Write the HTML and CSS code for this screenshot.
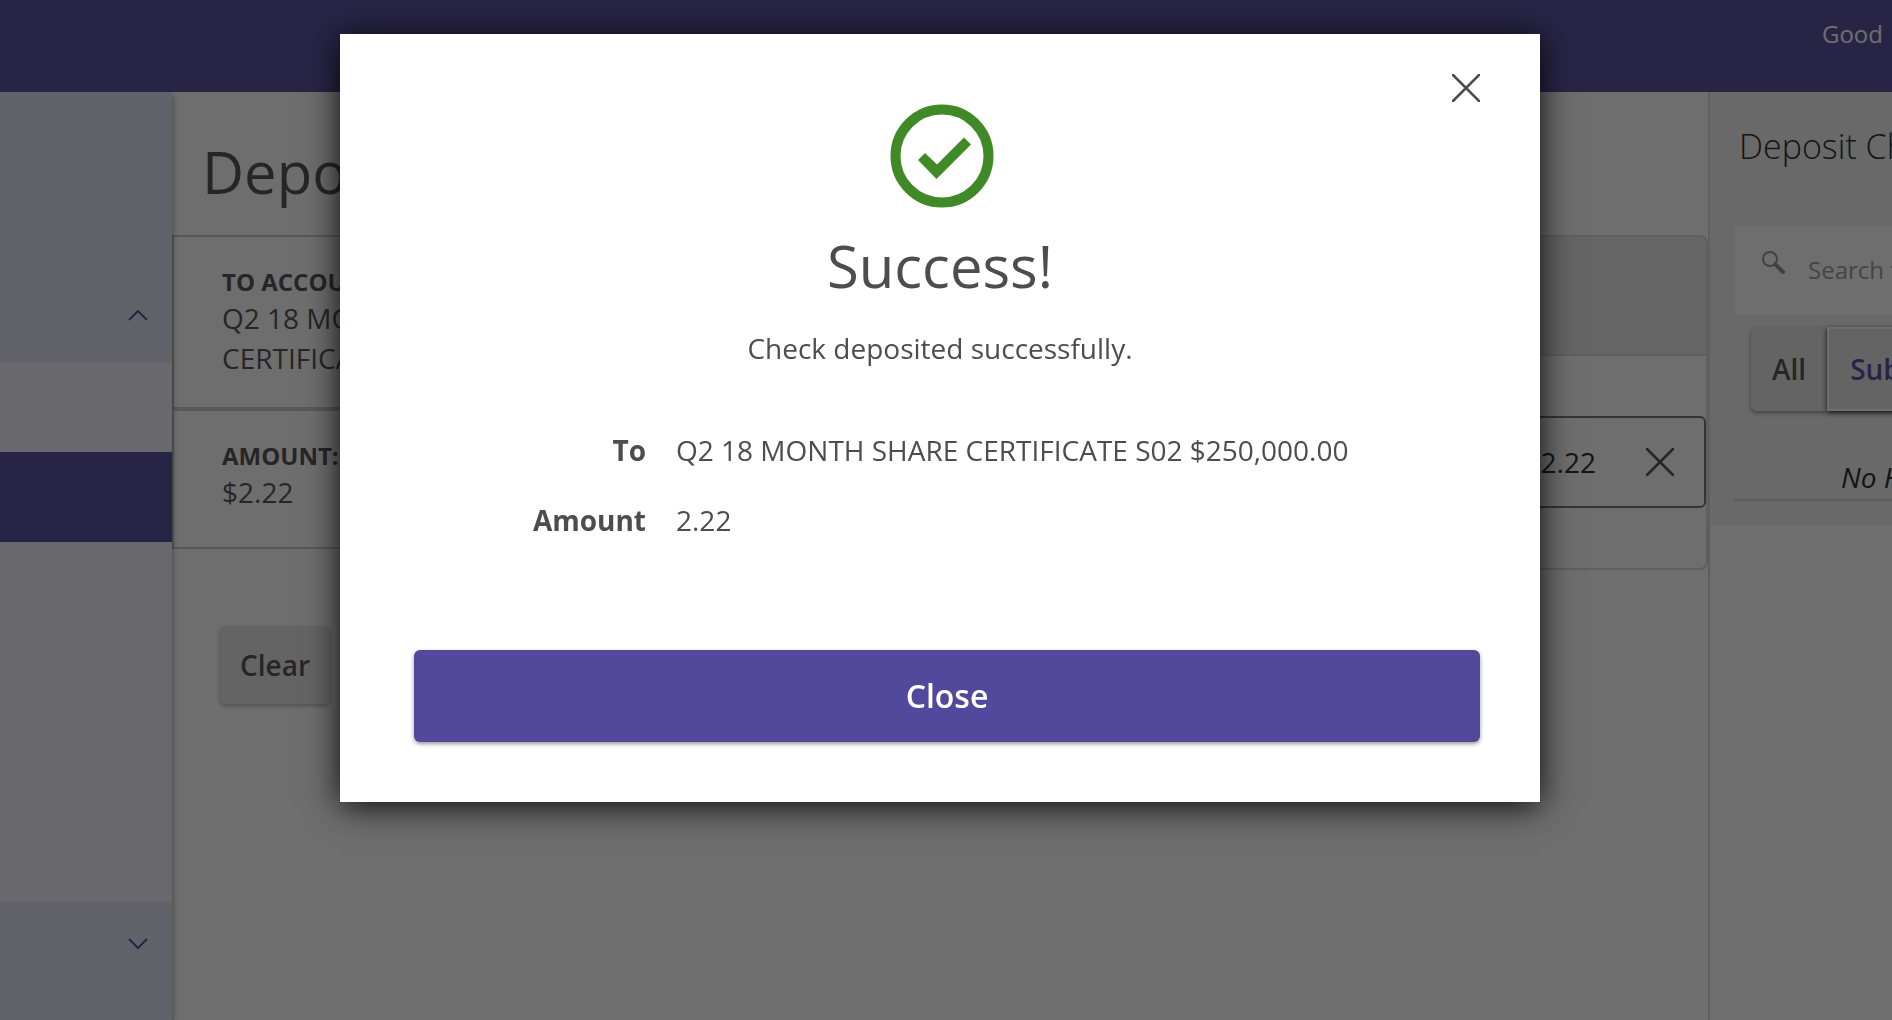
FILE: index.html
```html
<!DOCTYPE html>
<html lang="en">
<head>
    <meta charset="utf-8">
    <link rel="stylesheet" href="styles.css">
    <title>Deposit Check</title>
</head>
<body>
    <header class="top-bar">
        <span class="greeting">Good</span>
    </header>
    <div class="layout">
        <nav class="sidebar">
            <button class="nav-group nav-group-open" aria-label="Collapse menu">
                <svg width="20" height="16" viewBox="0 0 20 16"><path d="M1 10 L10 1 L19 10"/></svg>
            </button>
            <a class="nav-item" href="#" aria-label="Accounts"></a>
            <a class="nav-item active" href="#" aria-label="Deposit Check"></a>
            <div class="nav-items"></div>
            <button class="nav-group" aria-label="Expand menu">
                <svg width="20" height="16" viewBox="0 0 20 16"><path d="M1 1 L10 10 L19 1"/></svg>
            </button>
        </nav>
        <main class="main">
            <h1 class="page-title">Deposit Check</h1>
            <div class="deposit">
                <div class="summary">
                    <div class="summary-card">
                        <div class="summary-label">TO ACCOUNT:</div>
                        <div class="summary-value">Q2 18 MONTH SHARE CERTIFICATE</div>
                    </div>
                    <div class="summary-card">
                        <div class="summary-label">AMOUNT:</div>
                        <div class="summary-value">$2.22</div>
                    </div>
                </div>
                <div class="form-box">
                    <div class="form-head"></div>
                    <div class="amount-field">
                        <input class="amount-input" type="text" value="2.22" aria-label="Amount">
                        <button class="icon-button" aria-label="Clear amount">
                            <svg width="28" height="28" viewBox="0 0 28 28"><path d="M1 1 L27 27 M27 1 L1 27"/></svg>
                        </button>
                    </div>
                </div>
            </div>
            <button class="clear-button">Clear</button>
        </main>
        <aside class="history">
            <div class="history-panel">
                <h2 class="history-title">Deposit Check History</h2>
                <div class="search">
                    <svg width="24" height="24" viewBox="0 0 24 24">
                        <circle cx="8" cy="8" r="7"/>
                        <path class="handle" d="M14 14 L21 21"/>
                        <path d="M12 12 L15 15"/>
                    </svg>
                    <input class="search-input" type="text" placeholder="Search transactions" aria-label="Search transactions">
                </div>
                <div class="tabs">
                    <button class="tab">All</button>
                    <button class="tab selected">Submitted</button>
                </div>
                <p class="no-history">No History</p>
            </div>
        </aside>
    </div>

    <div class="overlay">
        <div class="modal" role="dialog" aria-modal="true" aria-labelledby="modal-title">
            <button class="icon-button modal-x" aria-label="Close dialog">
                <svg width="28" height="28" viewBox="0 0 28 28"><path d="M1 1 L27 27 M27 1 L1 27"/></svg>
            </button>
            <div class="modal-body">
                <svg class="success-icon" width="104" height="104" viewBox="0 0 104 104">
                    <circle cx="52" cy="52" r="46.5"/>
                    <path d="M28 56 L35 49 L47 60.5 L74 33.5 L81 40.5 L46.5 75 Z"/>
                </svg>
                <h2 class="modal-title" id="modal-title">Success!</h2>
                <p class="modal-text">Check deposited successfully.</p>
                <dl class="details">
                    <dt>To</dt>
                    <dd>Q2 18 MONTH SHARE CERTIFICATE S02 $250,000.00</dd>
                    <dt>Amount</dt>
                    <dd>2.22</dd>
                </dl>
            </div>
            <button class="close-button">Close</button>
        </div>
    </div>
</body>
</html>
```

FILE: styles.css
```css
* {
    box-sizing: border-box;
}

body {
    display: flex;
    flex-direction: column;
    height: 100vh;
    margin: 0;
    overflow: hidden;
    background-color: #fff;
    color: #4d4d4d;
    font-family: "Open Sans", "Noto Sans", sans-serif;
    font-size: 28px;
    line-height: 40px;
}

button,
input {
    font: inherit;
    color: inherit;
    border: 0;
    padding: 0;
    background: none;
}

button {
    cursor: pointer;
}

h1, h2, p, dl, dd {
    margin: 0;
    font-weight: 400;
}

.top-bar {
    position: relative;
    z-index: 2;
    display: flex;
    flex: none;
    justify-content: flex-end;
    height: 92px;
    padding: 16px 9px;
    background-color: #52489c;
    color: #fff;
    font-size: 24px;
    line-height: 36px;
}

.layout {
    display: flex;
    flex: 1;
    min-height: 0;
}

/* Sidebar */
.sidebar {
    position: relative;
    z-index: 1;
    display: flex;
    flex-direction: column;
    flex: 0 0 172px;
    background-color: #f2f0fa;
    box-shadow: 0 4px 6px rgba(0, 0, 0, 0.5);
}

.nav-group {
    display: flex;
    justify-content: flex-end;
    height: 118px;
    padding: 36px 24px;
    background-color: #e1e1f5;
}

.nav-group-open {
    align-items: flex-end;
    height: 270px;
}

.nav-group svg {
    fill: none;
    stroke: #52489c;
    stroke-width: 2;
}

.nav-item {
    height: 90px;
}

.nav-item.active {
    background-color: #52489c;
}

.nav-items {
    flex: 1;
}

/* Deposit form */
.main {
    flex: 1;
    min-width: 0;
    border-right: 2px solid #dadada;
}

.page-title {
    padding: 40px 30px 23px;
    font-size: 58px;
    line-height: 80px;
}

.deposit {
    display: flex;
}

.summary {
    flex: 0 0 400px;
}

.summary-card {
    min-height: 140px;
    padding: 28px 48px 29px;
    border: 2px solid #c8c8c8;
}

.summary-label {
    font-size: 24px;
    font-weight: 700;
    line-height: 33px;
}

.form-box {
    flex: 1;
    height: 335px;
    border: 2px solid #dadada;
    border-radius: 8px;
}

.form-head {
    height: 119px;
    border-bottom: 2px solid #dadada;
    border-radius: 6px 6px 0 0;
    background-color: #e8e8e8;
}

.amount-field {
    display: flex;
    align-items: center;
    height: 92px;
    margin-top: 60px;
    padding-right: 30px;
    border: 2px solid #707070;
    border-radius: 6px;
    color: #222;
}

.amount-input {
    flex: 1;
    text-align: right;
    margin-right: 50px;
}

.icon-button {
    width: 28px;
    height: 28px;
}

.icon-button svg {
    display: block;
    fill: none;
    stroke: #4d4d4d;
    stroke-width: 2.5;
    stroke-linecap: round;
}

.clear-button {
    height: 78px;
    margin: 56px 48px;
    padding: 0 20px;
    border-radius: 6px;
    background-color: #e6e6e6;
    box-shadow: 0 2px 4px rgba(0, 0, 0, 0.3);
    font-weight: 600;
}

/* History */
.history {
    flex: 0 0 182px;
    overflow: hidden;
    white-space: nowrap;
}

.history-panel {
    padding: 30px 0 24px 24px;
    background-color: #f2f2f2;
    color: #222;
}

.history-title {
    padding: 0 5px;
    font-size: 34px;
    font-weight: 300;
    line-height: 48px;
}

.search {
    display: flex;
    height: 90px;
    margin-top: 55px;
    padding-left: 28px;
    gap: 22px;
    border-radius: 6px 0 0 6px;
    background-color: #fff;
}

.search svg {
    flex: none;
    margin-top: 26px;
    fill: none;
    stroke: #909090;
    stroke-width: 2;
}

.search .handle {
    stroke-width: 4;
    stroke-linecap: round;
}

.search-input {
    flex: 1;
    min-width: 0;
    font-size: 24px;
}

.search-input::placeholder {
    color: #999;
}

.tabs {
    display: flex;
    height: 84px;
    margin: 12px 0 0 17px;
}

.tab {
    flex: none;
    padding: 0 21px;
    border-radius: 6px 0 0 6px;
    background-color: #e6e6e6;
    box-shadow: 0 2px 4px rgba(0, 0, 0, 0.4);
    color: #4d4d4d;
    font-weight: 600;
}

.tab.selected {
    border: 2px solid #fff;
    border-radius: 0;
    color: #52489c;
    box-shadow: 0 2px 5px rgba(0, 0, 0, 0.9);
}

.no-history {
    margin-top: 46px;
    padding: 0 0 2px 107px;
    border-bottom: 2px solid #dadada;
    font-style: italic;
}

/* Success dialog */
.overlay {
    position: fixed;
    z-index: 3;
    inset: 0;
    padding: 34px 352px 0 340px;
    background-color: rgba(13, 13, 13, 0.6);
}

.modal {
    display: flex;
    flex-direction: column;
    padding: 40px 60px 60px 74px;
    background-color: #fff;
    box-shadow: 0 4px 32px rgba(0, 0, 0, 0.9);
}

.modal-x {
    align-self: flex-end;
}

.modal-body {
    display: flex;
    flex-direction: column;
    align-items: center;
    margin-right: 14px;
}

.success-icon {
    margin: 2px 0 0 4px;
    fill: #3f8a26;
}

.success-icon circle {
    fill: none;
    stroke: #3f8a26;
    stroke-width: 10;
}

.modal-title {
    margin-top: 18px;
    font-size: 58px;
    line-height: 80px;
}

.modal-text {
    margin-top: 22px;
}

.details {
    display: grid;
    grid-template-columns: 232px 1fr;
    gap: 30px;
    align-self: stretch;
    margin-top: 62px;
}

.details dt {
    text-align: right;
    font-weight: 700;
}

.close-button {
    height: 92px;
    margin-top: 110px;
    border-radius: 6px;
    background-color: #52489c;
    box-shadow: 0 2px 4px rgba(0, 0, 0, 0.4);
    color: #fff;
    font-size: 32px;
    font-weight: 600;
}
```
